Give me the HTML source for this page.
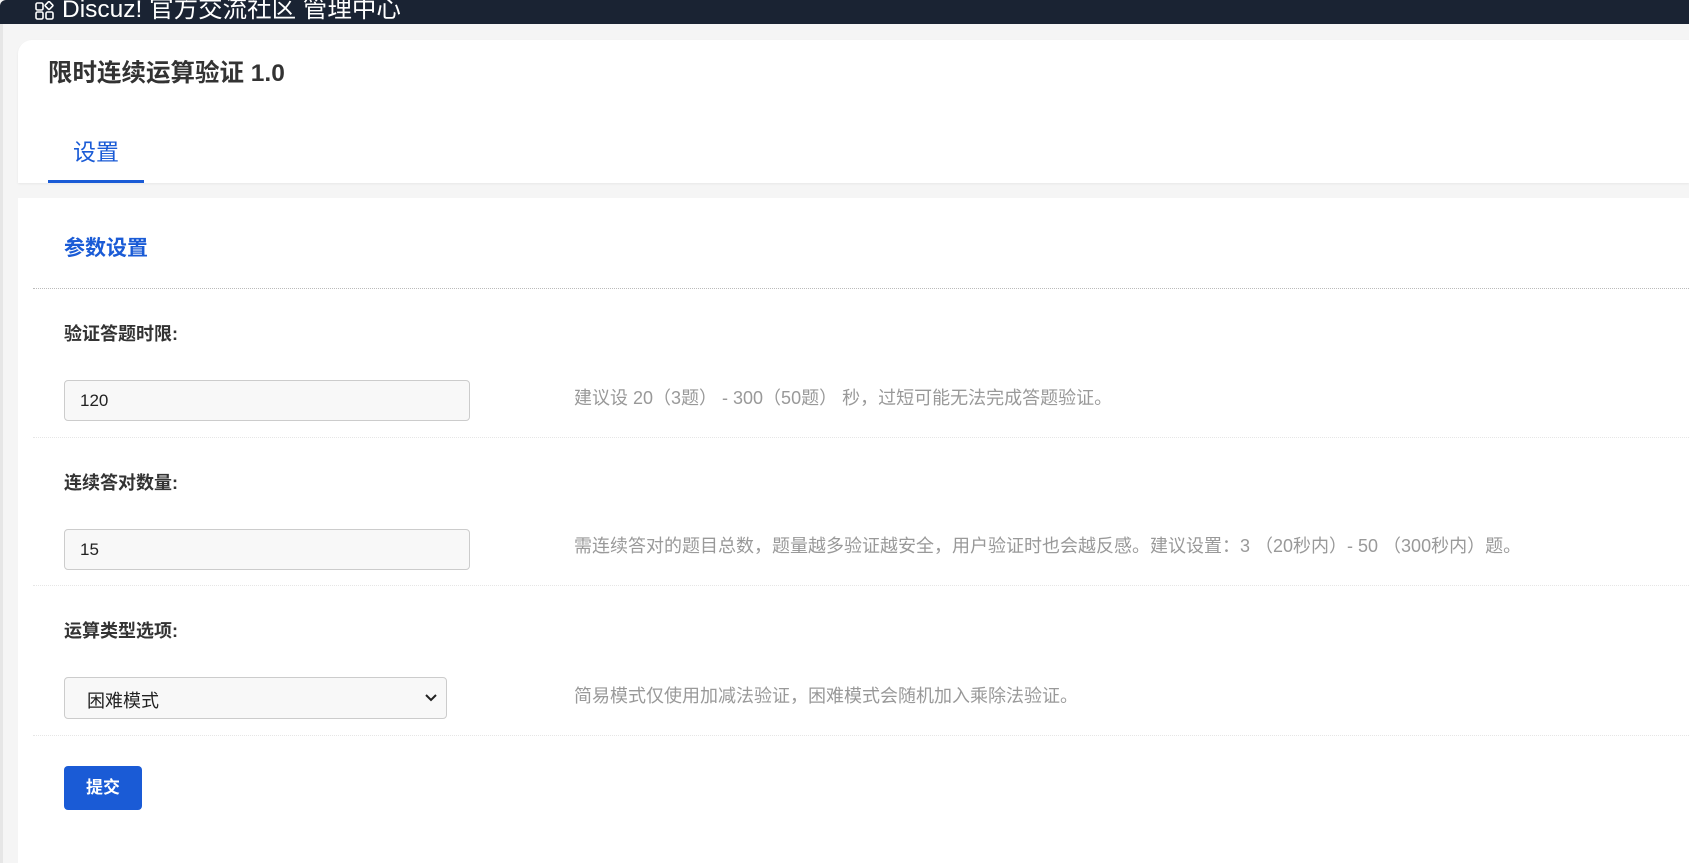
<!DOCTYPE html>
<html><head><meta charset="utf-8"><style>
*{box-sizing:border-box;margin:0;padding:0}
body{width:1689px;height:863px;overflow:hidden;background:#f5f5f5;font-family:"Liberation Sans","Noto Sans CJK SC",sans-serif;position:relative}
.hdr{position:absolute;left:0;top:0;width:1689px;height:24px;background:#1a2333;border-top-left-radius:6px;color:#fff;font-size:24.5px;line-height:20px;padding-left:62px;white-space:nowrap;overflow:hidden}
.hdr svg{position:absolute;left:35px;top:1px}
.lb{position:absolute;left:0;top:24px;width:3px;height:839px;background:#e6e6e6}
.c1{position:absolute;left:18px;top:40px;right:0;height:143px;background:#fff;border-top-left-radius:14px;box-shadow:0 1px 2px rgba(0,0,0,.06)}
.title{position:absolute;left:30px;top:14px;font-size:24.5px;font-weight:bold;color:#333}
.tab{position:absolute;left:55px;top:93px;font-size:23px;color:#1a5bd6}
.tabu{position:absolute;left:30px;top:140px;width:96px;height:3px;background:#1a5bd6}
.c2{position:absolute;left:18px;top:198px;right:0;bottom:0;background:#fff}
.a{position:absolute}
.sec{left:46px;top:34px;font-size:21px;font-weight:bold;color:#1a5bd6}
.dot{left:15px;right:0;height:0;border-top:1px dotted #bbb}
.sep{left:15px;right:0;height:0;border-top:1px dotted #e6e6e6}
.lbl{left:46px;font-size:18px;font-weight:bold;color:#333}
.inp{left:46px;width:406px;height:41px;background:#f8f8f8;border:1px solid #ccc;border-radius:4px;font-size:17px;color:#222;padding:10px 0 0 15px}
.help{left:556px;font-size:18px;color:#999;white-space:nowrap}
.btn{left:46px;top:568px;width:78px;height:44px;background:#1a5bd6;border-radius:4px;color:#fff;font-size:17px;font-weight:bold;text-align:center;line-height:44px}
</style></head><body>
<div class="hdr"><svg width="20" height="20" viewBox="0 0 20 20" fill="none" stroke="#fff" stroke-width="1.6"><rect x="1" y="11" width="7" height="7" rx="1.5"/><rect x="11" y="11" width="7" height="7" rx="1.5"/><rect x="1" y="2" width="7" height="7" rx="1.5"/><rect x="11" y="1.5" width="6" height="6" rx="1" transform="rotate(45 14 4.5)"/></svg>Discuz! 官方交流社区 管理中心</div>
<div class="lb"></div>
<div class="c1"><div class="title">限时连续运算验证 1.0</div><div class="tab">设置</div><div class="tabu"></div></div>
<div class="c2">
<div class="a sec">参数设置</div>
<div class="a dot" style="top:90px"></div>
<div class="a lbl" style="top:122px">验证答题时限:</div>
<div class="a inp" style="top:182px">120</div>
<div class="a help" style="top:186px">建议设 20（3题） - 300（50题） 秒，过短可能无法完成答题验证。</div>
<div class="a sep" style="top:239px"></div>
<div class="a lbl" style="top:271px">连续答对数量:</div>
<div class="a inp" style="top:331px">15</div>
<div class="a help" style="top:334px">需连续答对的题目总数，题量越多验证越安全，用户验证时也会越反感。建议设置：3 （20秒内）- 50 （300秒内）题。</div>
<div class="a sep" style="top:387px"></div>
<div class="a lbl" style="top:419px">运算类型选项:</div>
<div class="a inp" style="top:479px;width:383px;height:42px;padding-left:22px;font-size:18px;padding-top:9px">困难模式<svg style="position:absolute;right:8px;top:15px" width="14" height="10" viewBox="0 0 14 10"><path d="M2 2l5 5 5-5" fill="none" stroke="#222" stroke-width="2"/></svg></div>
<div class="a help" style="top:484px">简易模式仅使用加减法验证，困难模式会随机加入乘除法验证。</div>
<div class="a sep" style="top:537px"></div>
<div class="a btn">提交</div>
</div>
</body></html>
